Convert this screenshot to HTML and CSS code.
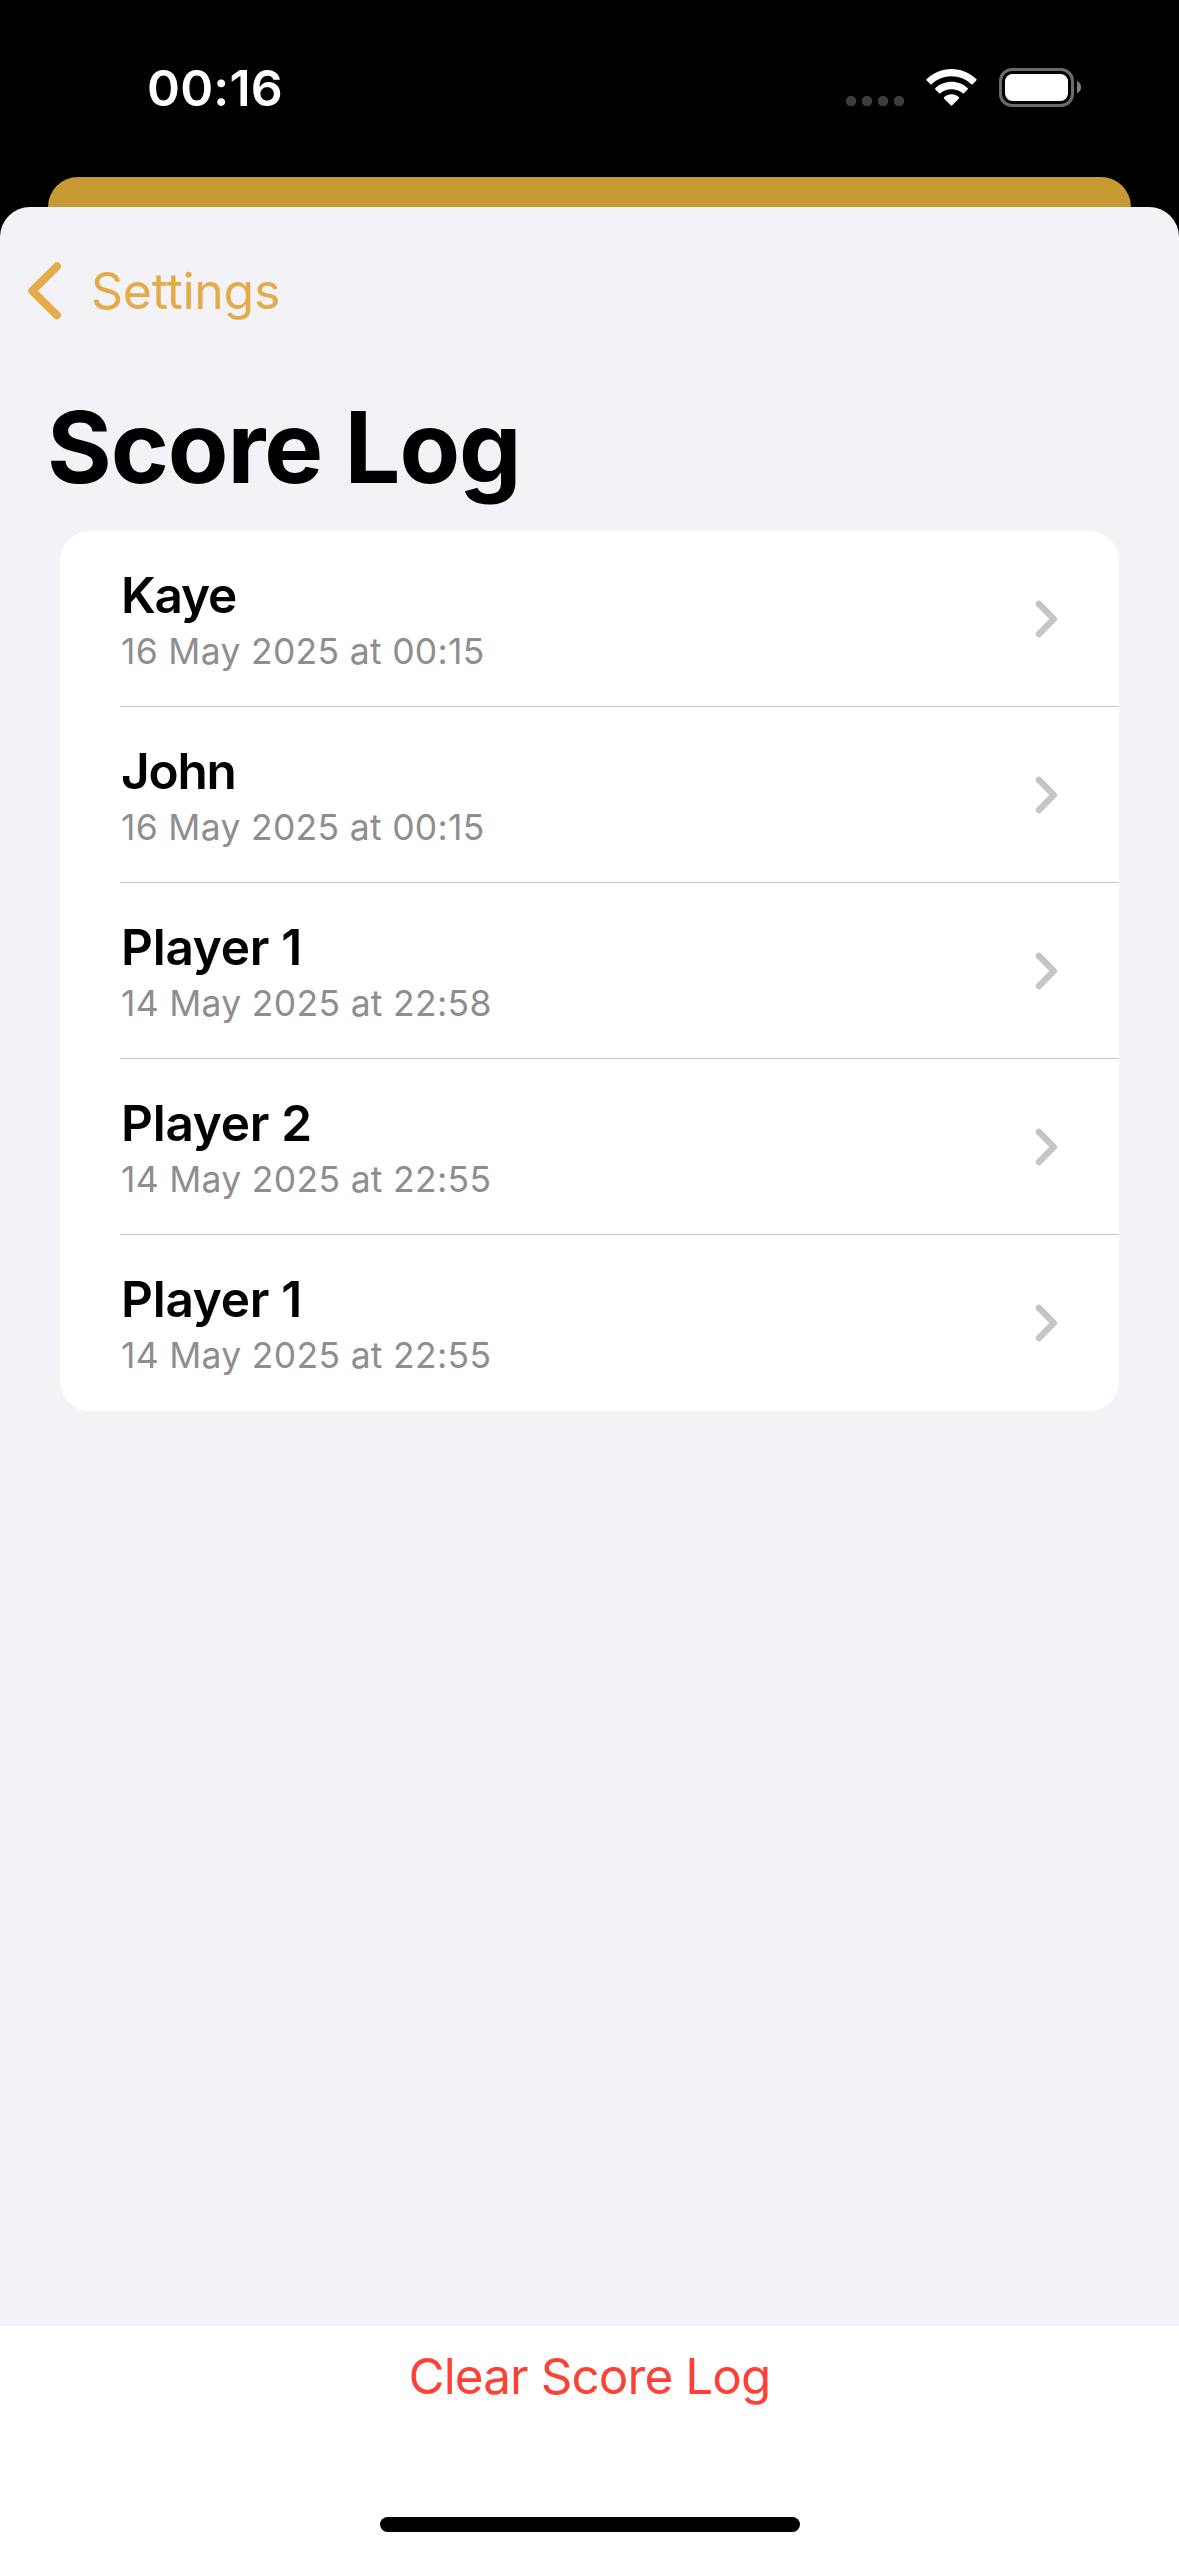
FILE: index.html
```html
<!DOCTYPE html>
<html lang="en">
<head>
<meta charset="utf-8">
<title>Score Log</title>
<link rel="stylesheet" href="styles.css">
</head>
<body>
<div class="phone">
  <header class="status">
    <span class="time">00:16</span>
    <span class="indicators">
      <svg class="dots" width="60" height="12" viewBox="0 0 60 12"><g fill="#3c3c3b"><circle cx="6" cy="6" r="5.200"/><circle cx="22" cy="6" r="5.200"/><circle cx="38" cy="6" r="5.200"/><circle cx="54" cy="6" r="5.200"/></g></svg>
      <svg class="wifi" width="51" height="38" viewBox="0 0 51 38"><g fill="#fff"><path d="M25.500 0C35 0 44 3.800 50.500 10.200Q51 10.700 50.500 11.300L46.600 15.200Q46 15.800 45.400 15.200C40 10.200 33 7.300 25.500 7.300S11 10.200 5.600 15.200Q5 15.800 4.400 15.200L.5 11.300Q0 10.700 .5 10.200C7 3.800 16 0 25.500 0Z"/><path d="M25.500 12.700C31.500 12.700 37.500 15 41.800 19.200Q42.300 19.700 41.800 20.300L37.900 24.200Q37.300 24.800 36.700 24.300C33.600 21.700 29.700 20.300 25.500 20.300S17.400 21.700 14.300 24.300Q13.700 24.800 13.100 24.200L9.200 20.300Q8.700 19.700 9.200 19.200C13.500 15 19.500 12.700 25.500 12.700Z"/><path d="M25.500 25.300C28.300 25.300 31 26.400 33 28.300Q33.600 28.900 33 29.500L26 36.600Q25.500 37.100 25 36.600L18 29.500Q17.400 28.900 18 28.300C20 26.400 22.700 25.300 25.500 25.300Z"/></g></svg>
      <svg class="battery" width="82" height="40" viewBox="0 0 82 40"><rect x="1.500" y="1.500" width="72" height="36" rx="11.500" fill="none" stroke="#6b6b6b" stroke-width="3"/><rect x="6" y="6" width="63" height="27" rx="7.500" fill="#fff"/><path d="M78 13Q82 15 82 19.200T78 25.500Z" fill="#808080"/></svg>
    </span>
  </header>
  <div class="backdrop"></div>
  <main class="sheet">
    <nav class="back"><svg width="36" height="60" viewBox="0 0 36 60"><path d="M30 5.300L5.300 29.800L30 54.300" fill="none" stroke="#e5ab48" stroke-width="8" stroke-linecap="round" stroke-linejoin="round"/></svg><span class="back-label">Settings</span></nav>
    <h1 class="title">Score Log</h1>
    <ul class="list">
      <li class="row"><div class="entry"><span class="name tight">Kaye</span><span class="date">16 May 2025 at 00:15</span></div><svg class="chevron" width="24" height="38" viewBox="0 0 24 38"><path d="M4 4L18.800 19L4 34"/></svg></li>
      <li class="row"><div class="entry"><span class="name tight">John</span><span class="date">16 May 2025 at 00:15</span></div><svg class="chevron" width="24" height="38" viewBox="0 0 24 38"><path d="M4 4L18.800 19L4 34"/></svg></li>
      <li class="row"><div class="entry"><span class="name">Player 1</span><span class="date">14 May 2025 at 22:58</span></div><svg class="chevron" width="24" height="38" viewBox="0 0 24 38"><path d="M4 4L18.800 19L4 34"/></svg></li>
      <li class="row"><div class="entry"><span class="name">Player 2</span><span class="date">14 May 2025 at 22:55</span></div><svg class="chevron" width="24" height="38" viewBox="0 0 24 38"><path d="M4 4L18.800 19L4 34"/></svg></li>
      <li class="row"><div class="entry"><span class="name">Player 1</span><span class="date">14 May 2025 at 22:55</span></div><svg class="chevron" width="24" height="38" viewBox="0 0 24 38"><path d="M4 4L18.800 19L4 34"/></svg></li>
    </ul>
  </main>
  <footer class="footer"><span class="clear">Clear Score Log</span><div class="home"></div></footer>
</div>
</body>
</html>
```
FILE: styles.css
```css
* { box-sizing: border-box; }
body { margin: 0; background: #000; font-family: Inter, "Liberation Sans", sans-serif; }
svg { display: block; flex: none; }
.phone { width: 1179px; height: 2556px; display: flex; flex-direction: column; overflow: hidden; }
.status { height: 177px; flex: none; display: flex; justify-content: space-between; align-items: flex-start; padding: 0 98px 0 147px; color: #fff; }
.time { font-size: 50px; font-weight: 600; line-height: 60px; margin-top: 58px; letter-spacing: 0.2px; }
.indicators { display: flex; align-items: flex-start; padding-top: 68px; }
.dots { margin-top: 27px; margin-right: 21px; }
.wifi { margin-top: 1px; margin-right: 22px; }
.backdrop { height: 60px; flex: none; margin: 0 48px -30px; background: #c69932; border-radius: 30px 30px 0 0; }
.sheet { flex: 1; position: relative; background: #f2f2f7; border-radius: 30px 30px 0 0; }
.back { height: 168px; display: flex; align-items: center; padding-left: 27px; gap: 28px; color: #e5ab48; }
.back-label { font-size: 50px; letter-spacing: -0.3px; }
.title { margin: 0; padding: 17px 0 0 47px; height: 156px; font-size: 99px; line-height: 110px; font-weight: 700; letter-spacing: -1.1px; }
.list { list-style: none; margin: 0 60px; padding: 0 0 0 60px; background: #fff; border-radius: 30px; }
.row { height: 176px; display: flex; align-items: center; justify-content: space-between; padding-right: 60px; border-bottom: 1px solid #c6c6c8; }
.row:last-child { border-bottom-color: transparent; }
.entry { display: flex; flex-direction: column; padding: 7px 0 0 1px; }
.name { font-size: 49.5px; font-weight: 600; line-height: 60px; letter-spacing: -0.25px; }
.name.tight { letter-spacing: -1.2px; }
.date { font-size: 35.5px; line-height: 54px; letter-spacing: 0.3px; color: #8e8e90; }
.chevron { fill: none; stroke: #c5c5c6; stroke-width: 6.5px; stroke-linecap: round; stroke-linejoin: round; }
.footer { height: 230px; flex: none; background: #fff; display: flex; flex-direction: column; align-items: center; justify-content: space-between; padding: 20px 0 24px; }
.clear { font-size: 49.3px; line-height: 60px; letter-spacing: -0.85px; color: #ff4035; }
.home { width: 420px; height: 15px; border-radius: 8px; background: #000; }
```
